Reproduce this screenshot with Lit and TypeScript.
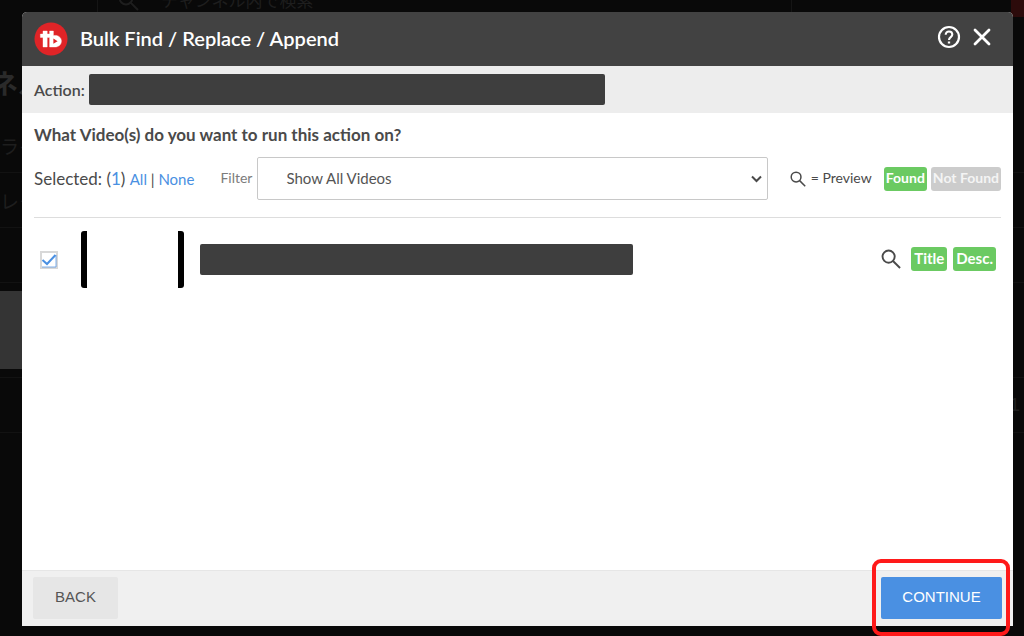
import { LitElement, html, css, svg } from "lit";
import { customElement, property, state } from "lit/decorators.js";

const magnifier = svg`<circle cx="8" cy="8" r="6.4"></circle><path d="M12.6 12.6 L20 20"></path>`;

@customElement("backdrop-page")
class BackdropPage extends LitElement {
  static styles = css`
    :host {
      display: flex;
      flex-direction: column;
      height: 100%;
      overflow: hidden;
      background: #090909;
      color: #1e1e1e;
      font-family: "Noto Sans CJK JP", sans-serif;
    }
    .top {
      display: flex;
      height: 17px;
      padding-left: 97px;
    }
    .search {
      box-sizing: border-box;
      flex: 0 1 695px;
      display: flex;
      align-items: flex-end;
      gap: 22px;
      padding-left: 20px;
      border: solid #151515;
      border-width: 0 1px;
      font-size: 17px;
      line-height: 26px;
    }
    .search svg {
      width: 21px;
      height: 21px;
      fill: none;
      stroke: #1e1e1e;
      stroke-width: 2;
      margin-bottom: 6px;
    }
    .search span {
      margin-bottom: 4px;
    }
    .create {
      margin-left: auto;
      width: 13px;
      background: #2c0b0b;
    }
    .title {
      display: flex;
      align-items: center;
      height: 36px;
      margin: 48px 0 17px -9px;
      line-height: 36px;
      font-size: 27px;
      font-weight: 700;
      color: #2a2a2a;
    }
    .line {
      height: 54px;
      border-bottom: 1px solid #121212;
      display: flex;
      align-items: center;
      justify-content: space-between;
      font-size: 19px;
    }
    .chosen {
      width: 50%;
      height: 78px;
      margin: 8px 0;
      background: #343434;
    }
    .rule {
      border-bottom: 1px solid #121212;
    }
    .count {
      margin-left: auto;
      padding-right: 4px;
      font-family: "Liberation Sans", sans-serif;
    }
  `;

  render() {
    return html`
      <div class="top">
        <div class="search">
          <svg viewBox="0 0 21 21">${magnifier}</svg>
          <span>チャンネル内で検索</span>
        </div>
        <div class="create"></div>
      </div>
      <div class="title">ネル</div>
      <div class="line">ライ</div>
      <div class="line">レタ</div>
      <div class="line"></div>
      <div class="chosen"></div>
      <div class="rule"></div>
      <div class="line"><span class="count">1</span></div>
    `;
  }
}

@customElement("tag-badge")
class TagBadge extends LitElement {
  @property({ type: Boolean }) muted = false;

  static styles = css`
    :host {
      display: block;
    }
    .tag {
      height: 24px;
      line-height: 22px;
      padding: 0 var(--tag-padding, 3px);
      border-radius: 3px;
      background: #6bca62;
      color: #fff;
      font-weight: 700;
      white-space: nowrap;
    }
    .muted {
      background: #ccc;
      color: #f4f4f4;
    }
  `;

  render() {
    return html`<div class="tag ${this.muted ? "muted" : ""}"><slot></slot></div>`;
  }
}

@customElement("app-root")
class AppRoot extends LitElement {
  @state() private selected = true;

  static styles = css`
    :host {
      display: block;
      position: relative;
      height: 100vh;
      overflow: hidden;
      font-family: Lato, "Liberation Sans", sans-serif;
      color: #4a4a4a;
    }
    * {
      box-sizing: border-box;
    }
    button {
      font: inherit;
      border: 0;
      padding: 0;
      background: none;
      color: inherit;
      cursor: pointer;
    }
    svg {
      display: block;
      fill: none;
      stroke: currentColor;
    }
    .dialog {
      position: absolute;
      inset: 12px 11px 10px 22px;
      display: flex;
      flex-direction: column;
      background: #fff;
      border-radius: 5px 5px 0 0;
      overflow: hidden;
    }
    header {
      display: flex;
      align-items: center;
      height: 54px;
      padding: 0 22px 0 12px;
      background: #424242;
      color: #fff;
    }
    .logo {
      width: 34px;
      height: 34px;
    }
    h1 {
      flex: 1;
      margin: 0 0 0 12px;
      padding-bottom: 2px;
      font-size: 20px;
      line-height: 24px;
      font-weight: 600;
    }
    .tools {
      display: flex;
      gap: 12px;
      padding-bottom: 5px;
    }
    .tools svg {
      height: 24px;
    }
    .action {
      display: flex;
      align-items: center;
      gap: 4px;
      height: 47px;
      padding: 0 12px;
      background: #ededed;
      font-size: 16px;
      font-weight: 600;
    }
    .redacted {
      height: 31px;
      border-radius: 2px;
      background: #3e3e3e;
    }
    .wide {
      flex: 0 1 516px;
    }
    .mid {
      flex: 0 1 433px;
    }
    main {
      flex: 1;
      padding: 0 12px;
    }
    h2 {
      margin: 0;
      padding: 10px 0;
      font-size: 17px;
      line-height: 24px;
      font-weight: 700;
    }
    .filters {
      display: flex;
      align-items: center;
      height: 61px;
      padding-bottom: 17px;
      border-bottom: 1px solid #ddd;
      white-space: nowrap;
    }
    .selected {
      font-size: 17px;
    }
    a {
      color: #4a90e2;
      text-decoration: none;
    }
    .pick {
      font-size: 15px;
    }
    .filter-label {
      margin: 0 5px 0 26px;
      padding-bottom: 2px;
      font-size: 14px;
      color: #7c7c7c;
    }
    .select {
      position: relative;
      flex: 1;
      height: 43px;
    }
    select {
      appearance: none;
      width: 100%;
      height: 100%;
      padding: 0 28px 2px;
      border: 1px solid #c8c8c8;
      border-radius: 2px;
      background: #fff;
      font: inherit;
      font-size: 15px;
      color: #555;
    }
    .select svg {
      position: absolute;
      right: 6px;
      top: 18px;
      width: 11px;
      height: 8px;
      stroke-width: 2;
      pointer-events: none;
    }
    .legend {
      --tag-padding: 2px;
      display: flex;
      align-items: center;
      gap: 4px;
      padding-left: 22px;
      font-size: 14px;
    }
    .legend svg {
      width: 16px;
      height: 16px;
      stroke-width: 2;
    }
    .legend span {
      width: 66px;
      margin: 0 3px 0 1px;
      padding-bottom: 2px;
    }
    .video {
      display: flex;
      align-items: center;
      height: 82px;
      padding: 0 5px 0 6px;
    }
    .video input {
      display: block;
      appearance: none;
      width: 18px;
      height: 18px;
      margin: 0;
      border: 2px solid #d8d8d8;
    }
    .check {
      position: relative;
      display: block;
      width: 18px;
      height: 18px;
      margin-top: 2px;
    }
    .check svg {
      position: absolute;
      inset: 0;
      stroke: #4a90e2;
      pointer-events: none;
    }
    .thumb {
      width: 103px;
      height: 57px;
      margin: 0 16px 0 23px;
      border: solid #000;
      border-width: 0 6px;
      border-radius: 3px;
    }
    .results {
      display: flex;
      align-items: center;
      gap: 6px;
      margin-left: auto;
      font-size: 15px;
    }
    .results svg {
      width: 20px;
      height: 20px;
      margin-right: 4px;
      stroke-width: 2;
    }
    footer {
      display: flex;
      align-items: center;
      justify-content: space-between;
      height: 56px;
      padding: 0 11px 2px;
      border-top: 1px solid #e6e6e6;
      background: #f0f0f0;
      font-family: "Liberation Sans", sans-serif;
      font-size: 15px;
    }
    .back,
    .continue {
      height: 42px;
      padding-bottom: 2px;
      border-radius: 2px;
    }
    .back {
      width: 85px;
      background: #e6e6e6;
      color: #555;
    }
    .continue {
      width: 121px;
      background: #4a90e2;
      color: #fff;
    }
    .marker {
      position: absolute;
      right: 14px;
      bottom: 0;
      width: 138px;
      height: 77px;
      border: 4px solid #ff1a1a;
      border-radius: 9px;
      pointer-events: none;
    }
  `;

  private setAll(e: Event, value: boolean) {
    e.preventDefault();
    this.selected = value;
  }

  render() {
    return html`
      <backdrop-page aria-hidden="true"></backdrop-page>
      <section class="dialog" role="dialog" aria-labelledby="title">
        <header>
          <svg class="logo" viewBox="0 0 34 34">
            <circle cx="17" cy="17" r="16.5" fill="#e02427" stroke="none"></circle>
            <path
              d="M9 9 H13.2 V12 H15.6 V9 H19.4 V13.6 C24 12.6 27.4 15.4 27.4 19 C27.4 22.8 24.5 25 21 25 H15.6 V15.4 H13.2 V25 H9 V15.4 H6.4 V12 H9 Z"
              fill="#fff"
              stroke="#fff"
              stroke-width="0.4"
              stroke-linejoin="round"
            ></path>
            <path d="M19.4 16.6 L23.6 19.2 L19.4 21.8 Z" fill="#e02427" stroke="none"></path>
          </svg>
          <h1 id="title">Bulk Find / Replace / Append</h1>
          <div class="tools">
            <button aria-label="Help">
              <svg width="24" height="24" viewBox="0 0 24 24">
                <circle cx="12" cy="12" r="10" stroke-width="2.2"></circle>
                <path d="M8.7 9.8 C8.7 5.2 15.3 5.5 15.3 9.6 C15.3 12.1 12 12.2 12 15" stroke-width="2.1"></path>
                <path d="M12 16.4 V18.6" stroke-width="2.3"></path>
              </svg>
            </button>
            <button aria-label="Close">
              <svg width="18" height="24" viewBox="0 0 18 24">
                <path d="M2 5 L16 19 M16 5 L2 19" stroke-width="2.8" stroke-linecap="round"></path>
              </svg>
            </button>
          </div>
        </header>
        <div class="action">
          <span>Action:</span>
          <div class="redacted wide"></div>
        </div>
        <main>
          <h2>What Video(s) do you want to run this action on?</h2>
          <div class="filters">
            <div class="selected">
              Selected: (<a href="#selected">${this.selected ? 1 : 0}</a>)
              <span class="pick"
                ><a href="#all" @click=${(e: Event) => this.setAll(e, true)}>All</a> |
                <a href="#none" @click=${(e: Event) => this.setAll(e, false)}>None</a></span
              >
            </div>
            <label class="filter-label" for="filter">Filter</label>
            <div class="select">
              <select id="filter">
                <option>Show All Videos</option>
              </select>
              <svg viewBox="0 0 11 8"><path d="M1 1.5 L5.5 6 L10 1.5"></path></svg>
            </div>
            <div class="legend">
              <svg viewBox="0 0 21 21">${magnifier}</svg>
              <span>= Preview</span>
              <tag-badge>Found</tag-badge>
              <tag-badge muted>Not Found</tag-badge>
            </div>
          </div>
          <div class="video">
            <label class="check">
              <input
                type="checkbox"
                aria-label="Select video"
                .checked=${this.selected}
                @change=${(e: Event) => (this.selected = (e.target as HTMLInputElement).checked)}
              />
              ${this.selected
                ? html`<svg viewBox="0 0 18 18">
                    <path d="M2.5 9 L7 13 L15.5 4" stroke-width="2"></path>
                    <path d="M2 16 H16 V4" stroke-width="1" opacity="0.7"></path>
                  </svg>`
                : null}
            </label>
            <div class="thumb"></div>
            <div class="redacted mid"></div>
            <div class="results">
              <button aria-label="Preview">
                <svg viewBox="0 0 21 21">${magnifier}</svg>
              </button>
              <tag-badge>Title</tag-badge>
              <tag-badge>Desc.</tag-badge>
            </div>
          </div>
        </main>
        <footer>
          <button class="back">BACK</button>
          <button class="continue">CONTINUE</button>
        </footer>
      </section>
      <div class="marker"></div>
    `;
  }
}
